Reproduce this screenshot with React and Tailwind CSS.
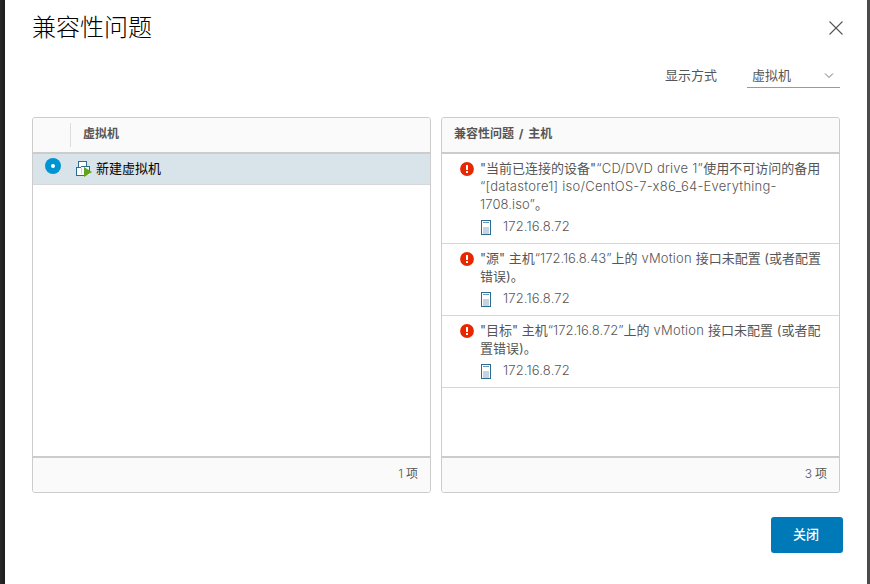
import React from 'react';

const Latin = ({ className = '', children }) => <span className={`font-light ${className}`}>{children}</span>;

function ErrorIcon() {
  return (
    <svg className="mt-[3px] h-[14px] w-[14px] shrink-0" viewBox="0 0 14 14">
      <circle cx="7" cy="7" r="6.9" fill="#e62700" />
      <rect x="6" y="3" width="2" height="5" fill="#fff" />
      <rect x="6" y="9" width="2" height="2" fill="#fff" />
    </svg>
  );
}

function HostIcon() {
  return (
    <svg className="h-[15px] w-[10px] shrink-0" viewBox="0 0 10 15" shapeRendering="crispEdges">
      <rect width="10" height="15" fill="#2b6c92" />
      <rect x="1" y="1" width="8" height="13" fill="#fff" />
      <rect x="2" y="2" width="6" height="1" fill="#6c9ab5" />
      <rect x="2" y="7" width="6" height="7" fill="#c5d4de" />
    </svg>
  );
}

function VmIcon() {
  return (
    <svg className="block h-[17px] w-[16px] shrink-0" viewBox="0 0 16 17">
      <g shapeRendering="crispEdges" fill="none" stroke="#2b6c92">
        <path d="M2 0H11V5H14V14H0V6H2Z" fill="#fff" stroke="none" />
        <path d="M2.500 6V0.500H10.500V5" />
        <path d="M5 5.500H13.500V10" />
        <path d="M5 6.500H0.500V14.500H9" />
        <path d="M5.500 7V13" stroke="#c5d4de" />
      </g>
      <path d="M8 6V16L16 11Z" fill="#60a51c" />
    </svg>
  );
}

function Issue({ children }) {
  return (
    <div className="border-b border-[#d7d7d7] pb-[8px] pt-[5px]">
      <div className="flex pl-[18px]">
        <ErrorIcon />
        <div className="ml-[6px] whitespace-nowrap leading-[18px]">{children}</div>
      </div>
      <div className="mt-[4px] flex h-[18px] items-end pl-[39px]">
        <HostIcon />
        <span className="ml-[12px] self-start font-light leading-[18px] tracking-[0.15px]">172.16.8.72</span>
      </div>
    </div>
  );
}

function Panel({ header, footer, children }) {
  return (
    <section className="flex h-[376px] w-[399px] flex-col overflow-hidden rounded-[3px] border border-[#ccc] bg-white">
      <div className="flex h-[36px] shrink-0 items-center border-b-2 border-[#ccc] bg-[#fafafa] text-[12px] font-bold text-[#565656]">{header}</div>
      <div className="flex-1">{children}</div>
      <div className="flex h-[36px] shrink-0 items-center justify-end border-t-2 border-[#ccc] bg-[#fafafa] pb-[2px] pr-[12px] text-[12px]">{footer}</div>
    </section>
  );
}

export default function App() {
  return (
    <div className="flex h-[584px] w-[870px] overflow-hidden bg-white font-['Inter','Noto_Sans_CJK_SC',sans-serif] text-[13px] text-[#565656]">
      <div className="w-[5px] shrink-0 bg-linear-to-r from-[#292929] to-[#1b1b1b]" />
      <main className="flex w-[862px] shrink-0 flex-col pl-[27px]">
        <header className="flex h-[56px] items-center justify-between pr-[23px]">
          <h1 className="text-[24px] font-light leading-[36px] text-black">兼容性问题</h1>
          <svg className="h-[16px] w-[16px]" viewBox="0 0 16 16" fill="none" stroke="#565656" strokeWidth="1.1">
            <path d="M1.500 1.500L14.500 14.500M14.500 1.500L1.500 14.500" />
          </svg>
        </header>
        <div className="mt-[6px] flex h-[26px] justify-end pr-[27px] leading-[26px]">
          <span className="mr-[30px]">显示方式</span>
          <div className="flex w-[93px] items-center justify-between border-b border-[#999] pl-[5px] pr-[6px]">
            <span>虚拟机</span>
            <svg className="h-[10px] w-[10px]" viewBox="0 0 10 10" fill="none" stroke="#737373" strokeWidth="1">
              <path d="M1 3.500L5 7.500L9 3.500" />
            </svg>
          </div>
        </div>
        <div className="mt-[29px] flex gap-[10px]">
          <Panel
            header={
              <>
                <div className="h-[24px] w-[38px] border-r border-[#ddd]" />
                <span className="ml-[12px] pb-[2px]">虚拟机</span>
              </>
            }
            footer={<span><span className="mr-[3px] font-light">1</span>项</span>}
          >
            <div className="flex h-[31px] items-center border-b border-[#d7d7d7] bg-[#d9e4ea] text-black">
              <span className="mb-[6px] ml-[12px] flex h-[16px] w-[16px] items-center justify-center rounded-full bg-[#0094d2]">
                <span className="h-[4px] w-[4px] rounded-full bg-white" />
              </span>
              <span className="ml-[15px]"><VmIcon /></span>
              <span className="ml-[4px] pb-px">新建虚拟机</span>
            </div>
          </Panel>
          <Panel
            header={<span className="ml-[12px] pb-[2px] [word-spacing:2px]">兼容性问题 / 主机</span>}
            footer={<span><span className="mr-[3px] font-light">3</span>项</span>}
          >
            <Issue>
              <p>"当前已连接的设备"<Latin className="tracking-[0.25px]">“CD/DVD drive 1”</Latin>使用不可访问的备用</p>
              <p><Latin className="tracking-[0.25px]">“[datastore1] iso/CentOS-7-x86_64-Everything-</Latin></p>
              <p><Latin className="tracking-[0.1px]">1708.iso”</Latin>。</p>
            </Issue>
            <Issue>
              <p>"源" 主机<Latin>“172.16.8.43”</Latin>上的<Latin className="tracking-[0.2px]"> vMotion </Latin>接口未配置 (或者配置</p>
              <p>错误)。</p>
            </Issue>
            <Issue>
              <p>"目标" 主机<Latin>“172.16.8.72”</Latin>上的<Latin className="tracking-[0.25px]"> vMotion </Latin>接口未配置 (或者配</p>
              <p>置错误)。</p>
            </Issue>
          </Panel>
        </div>
        <button className="ml-[739px] mt-[24px] h-[36px] w-[72px] rounded-[3px] bg-[#0079b8] pr-[2px] text-[13px] font-medium text-white">关闭</button>
      </main>
      <div className="w-[3px] shrink-0 bg-[#4b4b4b]" />
    </div>
  );
}
